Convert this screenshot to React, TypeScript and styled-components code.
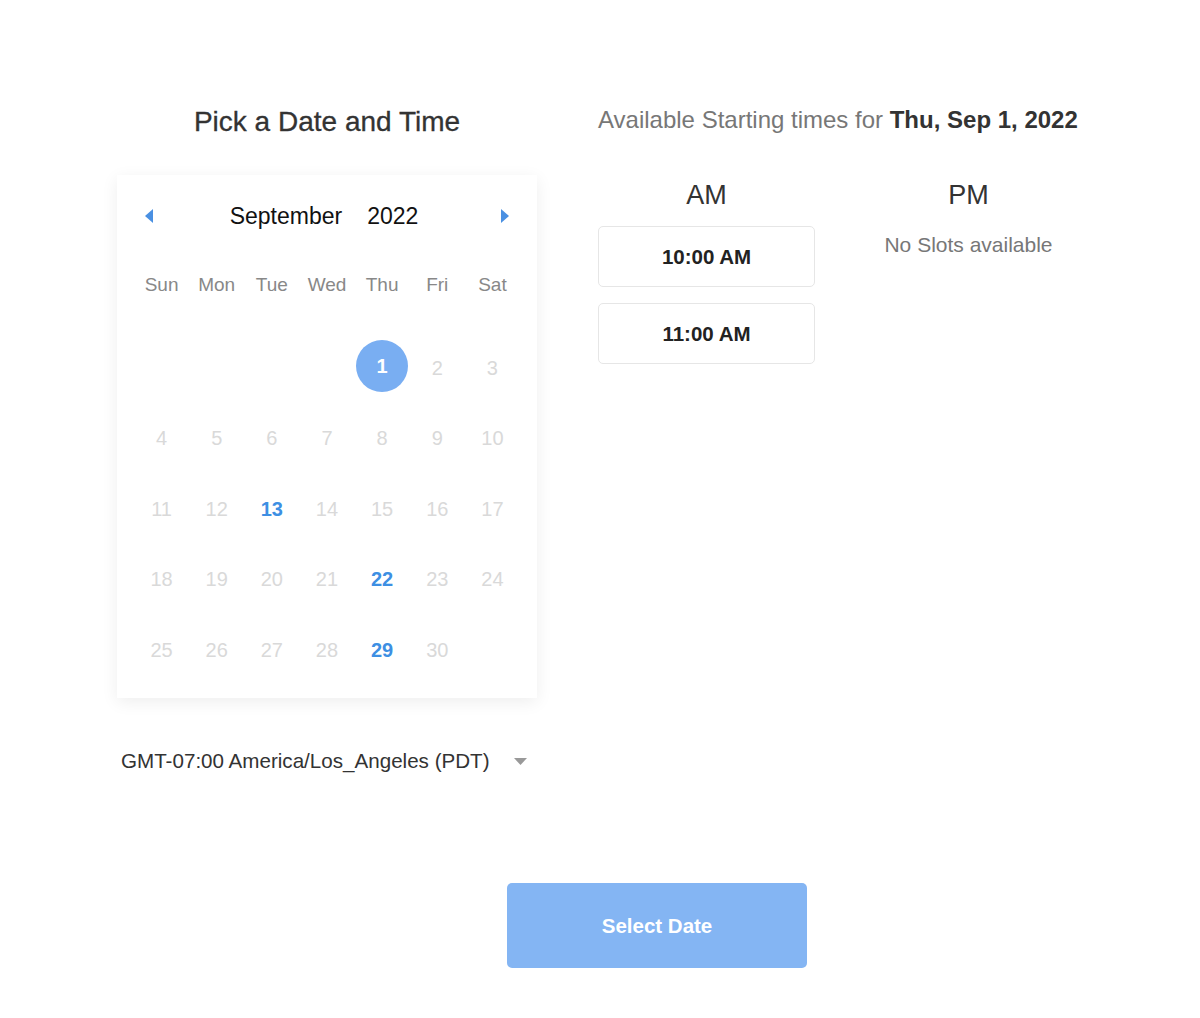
import React from "react";
import styled, { createGlobalStyle } from "styled-components";

const GlobalStyle = createGlobalStyle`
  body {
    margin: 0;
    background: #ffffff;
    font-family: "Liberation Sans", Arial, sans-serif;
  }
`;

const Page = styled.div`
  width: 966px;
  margin: 0 auto;
  padding-top: 106px;
`;

const Main = styled.div`
  display: flex;
  gap: 61px;
`;

const LeftColumn = styled.div`
  width: 420px;
  display: flex;
  flex-direction: column;
`;

const Title = styled.h1`
  margin: 0 0 37px;
  font-size: 28px;
  line-height: 32px;
  font-weight: 500;
  color: #333333;
  text-align: center;
  -webkit-text-stroke: 0.3px #333333;
`;

const Card = styled.div`
  background: #ffffff;
  box-shadow: 0 4px 16px rgba(0, 0, 0, 0.07);
  padding: 24px 17px 12.5px;
`;

const MonthBar = styled.div`
  display: flex;
  align-items: center;
  justify-content: space-between;
  height: 34px;
  padding: 0 10px;
`;

const Arrow = styled.button`
  display: flex;
  align-items: center;
  justify-content: center;
  width: 10px;
  height: 20px;
  padding: 0;
  border: none;
  background: none;
  cursor: pointer;
`;

const MonthLabel = styled.div`
  display: flex;
  gap: 25px;
  font-size: 23px;
  color: #111111;
  margin-right: 6px;
`;

const Grid = styled.div<{ $rowHeight: number }>`
  display: grid;
  grid-template-columns: repeat(7, 1fr);
  grid-auto-rows: ${(p) => p.$rowHeight}px;
  align-items: center;
  justify-items: center;
`;

const WeekdayGrid = styled(Grid)`
  margin-top: 37px;
`;

const DayGrid = styled(Grid)`
  margin-top: 33px;
`;

const Weekday = styled.div`
  font-size: 19px;
  color: #888888;
`;

const Day = styled.div<{ $available?: boolean; $selected?: boolean }>`
  display: flex;
  align-items: center;
  justify-content: center;
  width: 52px;
  height: 52px;
  border-radius: 50%;
  font-size: 20px;
  font-weight: ${(p) => (p.$available || p.$selected ? 700 : 400)};
  color: ${(p) => (p.$selected ? "#ffffff" : p.$available ? "#3d8fe3" : "#d9d9d9")};
  background: ${(p) => (p.$selected ? "#79aef2" : "transparent")};
  margin-top: ${(p) => (p.$selected ? "-4px" : "0")};
`;

const TimezoneRow = styled.div`
  display: flex;
  align-items: center;
  justify-content: space-between;
  margin-top: 51px;
  padding: 0 10px 0 4px;
  font-size: 20.6px;
  line-height: 24px;
  color: #333333;
`;

const RightColumn = styled.div`
  flex: 1;
`;

const Heading = styled.h2`
  margin: 0;
  font-size: 24px;
  line-height: 28px;
  font-weight: 400;
  color: #777777;
  white-space: nowrap;

  strong {
    color: #333333;
    font-weight: 700;
  }
`;

const Slots = styled.div`
  display: flex;
  gap: 45px;
  margin-top: 46px;
`;

const SlotColumn = styled.div`
  width: 217px;
  display: flex;
  flex-direction: column;
  align-items: stretch;
`;

const SlotHeader = styled.div`
  font-size: 27px;
  line-height: 30px;
  color: #333333;
  text-align: center;
  margin-bottom: 16px;
`;

const TimeButton = styled.button`
  height: 61px;
  margin-bottom: 16px;
  border: 1px solid #e6e6e6;
  border-radius: 5px;
  background: #ffffff;
  font-family: "Liberation Sans", Arial, sans-serif;
  font-size: 20.5px;
  font-weight: 700;
  color: #222222;
  cursor: pointer;
`;

const Empty = styled.div`
  margin-top: 7px;
  font-size: 21px;
  line-height: 24px;
  color: #777777;
  text-align: center;
`;

const Footer = styled.div`
  padding-left: 390px;
  margin-top: 110px;
`;

const SubmitButton = styled.button`
  width: 300px;
  height: 85px;
  border: none;
  border-radius: 5px;
  background: #84b5f3;
  color: #ffffff;
  font-family: "Liberation Sans", Arial, sans-serif;
  font-size: 20.5px;
  font-weight: 700;
  cursor: pointer;
`;

const weekdays = ["Sun", "Mon", "Tue", "Wed", "Thu", "Fri", "Sat"];
const available = [13, 22, 29];
const selected = 1;
const firstWeekday = 4;
const daysInMonth = 30;

function Triangle({ dir }: { dir: "left" | "right" }) {
  return (
    <svg width="8" height="14" viewBox="0 0 8 14">
      <polygon points={dir === "left" ? "8,0 8,14 0,7" : "0,0 0,14 8,7"} fill="#4a90e2" />
    </svg>
  );
}

function App() {
  const cells: (number | null)[] = [
    ...Array(firstWeekday).fill(null),
    ...Array.from({ length: daysInMonth }, (_, i) => i + 1),
  ];

  return (
    <>
      <GlobalStyle />
      <Page>
        <Main>
          <LeftColumn>
            <Title>Pick a Date and Time</Title>
            <Card>
              <MonthBar>
                <Arrow aria-label="Previous month">
                  <Triangle dir="left" />
                </Arrow>
                <MonthLabel>
                  <span>September</span>
                  <span>2022</span>
                </MonthLabel>
                <Arrow aria-label="Next month">
                  <Triangle dir="right" />
                </Arrow>
              </MonthBar>
              <WeekdayGrid $rowHeight={30}>
                {weekdays.map((w) => (
                  <Weekday key={w}>{w}</Weekday>
                ))}
              </WeekdayGrid>
              <DayGrid $rowHeight={70.5}>
                {cells.map((d, i) =>
                  d === null ? (
                    <div key={`e${i}`} />
                  ) : (
                    <Day key={d} $selected={d === selected} $available={available.includes(d)}>
                      {d}
                    </Day>
                  )
                )}
              </DayGrid>
            </Card>
            <TimezoneRow>
              <span>GMT-07:00 America/Los_Angeles (PDT)</span>
              <svg width="13" height="7" viewBox="0 0 13 7">
                <polygon points="0,0 13,0 6.5,7" fill="#999999" />
              </svg>
            </TimezoneRow>
          </LeftColumn>
          <RightColumn>
            <Heading>
              Available Starting times for <strong>Thu, Sep 1, 2022</strong>
            </Heading>
            <Slots>
              <SlotColumn>
                <SlotHeader>AM</SlotHeader>
                <TimeButton>10:00 AM</TimeButton>
                <TimeButton>11:00 AM</TimeButton>
              </SlotColumn>
              <SlotColumn>
                <SlotHeader>PM</SlotHeader>
                <Empty>No Slots available</Empty>
              </SlotColumn>
            </Slots>
          </RightColumn>
        </Main>
        <Footer>
          <SubmitButton>Select Date</SubmitButton>
        </Footer>
      </Page>
    </>
  );
}

export default App;
